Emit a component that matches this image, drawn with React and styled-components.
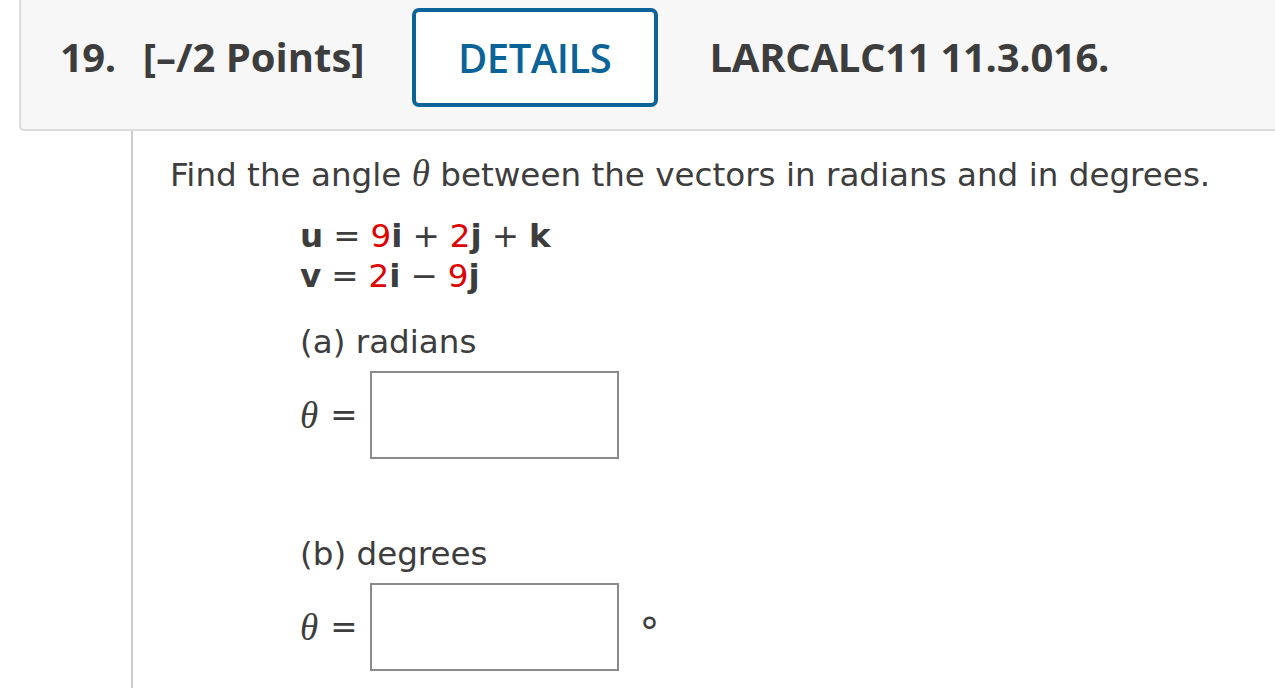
import React from "react";
import styled, { createGlobalStyle } from "styled-components";

const Global = createGlobalStyle`
  html, body {
    margin: 0;
    padding: 0;
    background: #ffffff;
    overflow: hidden;
  }
`;

const Page = styled.div`
  width: 1275px;
  height: 688px;
  overflow: hidden;
  background: #fff;
`;

const Header = styled.div`
  margin-left: 19px;
  height: 131px;
  box-sizing: border-box;
  padding-bottom: 16px;
  background: #f7f7f7;
  border-left: 2px solid #dcdcdc;
  border-bottom: 2px solid #dcdcdc;
  border-bottom-left-radius: 5px;
  display: flex;
  align-items: center;
  padding-left: 39px;
  font-family: "Open Sans", sans-serif;
  color: #3d3d3d;
`;

const Number = styled.span`
  font-size: 40px;
  font-weight: 700;
  letter-spacing: -0.5px;
`;

const Points = styled.span`
  font-size: 40px;
  font-weight: 700;
  letter-spacing: 0px;
  margin-left: 27px;
`;

const DetailsButton = styled.button`
  margin-left: 47px;
  width: 246px;
  height: 99px;
  margin-top: 1px;
  border: 4px solid #0b6398;
  border-radius: 7px;
  background: #fff;
  color: #0b6398;
  font-family: "Open Sans", sans-serif;
  font-size: 40px;
  font-weight: 600;
  letter-spacing: -0.5px;
  padding: 0;
`;

const Code = styled.span`
  margin-left: 52px;
  font-size: 40px;
  font-weight: 700;
  letter-spacing: -0.3px;
`;

const Body = styled.div`
  margin-left: 131px;
  border-left: 2px solid #cccccc;
  height: 560px;
  padding-left: 37px;
  padding-top: 22px;
  font-family: "DejaVu Sans", Verdana, sans-serif;
  font-size: 32.6px;
  color: #3d3d3d;
`;

const Prompt = styled.div`
  line-height: 42px;
`;

const Theta = styled.i`
  font-family: "Liberation Serif", "DejaVu Serif", serif;
  font-size: 37px;
`;

const Indent = styled.div`
  margin-left: 130px;
`;

const Equations = styled.div`
  margin-top: 20px;
  line-height: 40px;
`;

const Vec = styled.b`
  font-weight: 700;
`;

const Coef = styled.span`
  color: #e00000;
`;

const Op = styled.span`
  margin: 0 10px;
`;

const PartLabel = styled.div`
  margin-top: ${(p) => p.$top}px;
  line-height: 40px;
`;

const AnswerRow = styled.div`
  display: flex;
  align-items: center;
  margin-top: ${(p) => p.$top}px;
`;

const Eq = styled.span`
  margin-left: 12px;
  margin-right: 12px;
`;

const AnswerBox = styled.input`
  width: 249px;
  height: 88px;
  box-sizing: border-box;
  border: 2px solid #8a8a8a;
  background: #fff;
  padding: 0 8px;
  font-size: 30px;
`;

const Unit = styled.span`
  margin-left: 21px;
  margin-top: 12px;
  font-size: 40px;
`;

export default function App() {
  return (
    <Page>
      <Global />
      <Header>
        <Number>19.</Number>
        <Points>[–/2 Points]</Points>
        <DetailsButton>DETAILS</DetailsButton>
        <Code>LARCALC11 11.3.016.</Code>
      </Header>
      <Body>
        <Prompt>
          Find the angle <Theta>θ</Theta> between the vectors in radians and in degrees.
        </Prompt>
        <Indent>
          <Equations>
            <div>
              <Vec>u</Vec>
              <Op>=</Op>
              <Coef>9</Coef>
              <Vec>i</Vec>
              <Op>+</Op>
              <Coef>2</Coef>
              <Vec>j</Vec>
              <Op>+</Op>
              <Vec>k</Vec>
            </div>
            <div>
              <Vec>v</Vec>
              <Op>=</Op>
              <Coef>2</Coef>
              <Vec>i</Vec>
              <Op>−</Op>
              <Coef>9</Coef>
              <Vec>j</Vec>
            </div>
          </Equations>
          <PartLabel $top={26}>(a) radians</PartLabel>
          <AnswerRow $top={9}>
            <Theta>θ</Theta>
            <Eq>=</Eq>
            <AnswerBox type="text" />
          </AnswerRow>
          <PartLabel $top={75}>(b) degrees</PartLabel>
          <AnswerRow $top={9}>
            <Theta>θ</Theta>
            <Eq>=</Eq>
            <AnswerBox type="text" />
            <Unit>°</Unit>
          </AnswerRow>
        </Indent>
      </Body>
    </Page>
  );
}
